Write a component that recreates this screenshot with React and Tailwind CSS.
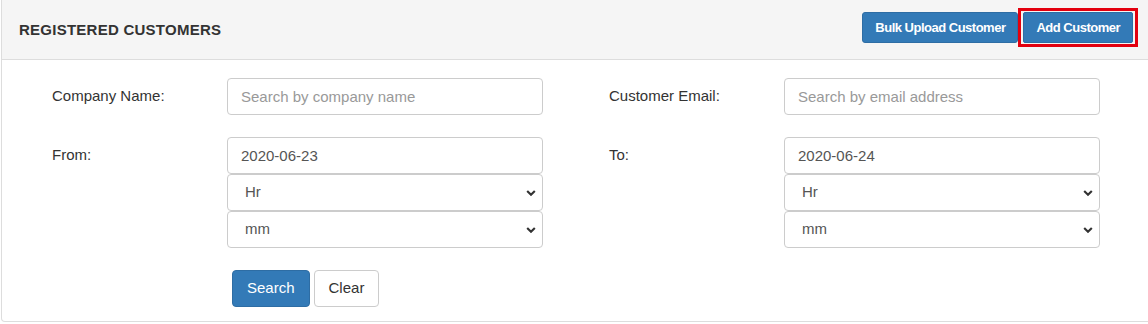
import React from "react";

const font = { fontFamily: '"Liberation Sans", Arial, sans-serif' };

function Chevron() {
  return (
    <svg
      className="pointer-events-none absolute right-[7px] top-1/2 -translate-y-1/2"
      width="10"
      height="7"
      viewBox="0 0 10 7"
    >
      <path d="M1.2 1.4 L5 5.2 L8.8 1.4" fill="none" stroke="#333" strokeWidth="2.1" />
    </svg>
  );
}

function Select({ value }) {
  return (
    <div className="relative h-[37px] w-[316px]">
      <select
        defaultValue={value}
        className="h-full w-full appearance-none rounded-[4px] border border-[#ccc] bg-white pl-[17px] text-[15px] text-[#555] outline-none"
        style={font}
      >
        <option>{value}</option>
      </select>
      <Chevron />
    </div>
  );
}

function TextInput({ placeholder, value }) {
  return (
    <input
      defaultValue={value}
      placeholder={placeholder}
      className="h-[37px] w-[316px] rounded-[4px] border border-[#ccc] bg-white px-[13px] text-[15px] text-[#555] placeholder:text-[#999] outline-none"
      style={font}
    />
  );
}

function DateBlock({ value }) {
  return (
    <div className="flex flex-col">
      <TextInput value={value} />
      <Select value="Hr" />
      <Select value="mm" />
    </div>
  );
}

export default function App() {
  return (
    <div className="h-[324px] w-[1148px] overflow-hidden bg-white" style={font}>
      <div className="ml-px w-[1150px] rounded-b-[4px] border-x border-b border-[#ddd]">
        <div className="flex h-[60px] items-start justify-between border-b border-[#ddd] bg-[#f5f5f5] pl-[17px] pr-[12px]">
          <div className="mt-[20px] text-[15px] font-bold leading-[20px] tracking-[0.25px] text-[#333]">
            REGISTERED CUSTOMERS
          </div>
          <div className="mt-[8px] flex items-center">
            <button className="h-[31px] rounded-[3px] border border-[#2e6da4] bg-[#337ab7] px-[12px] text-[13px] font-bold tracking-[-0.5px] text-white">
              Bulk Upload Customer
            </button>
            <div className="border-[3px] border-[#e3000f] px-[2px] py-[1px]">
              <button className="h-[31px] rounded-[2px] border border-[#2e6da4] bg-[#337ab7] px-[12px] text-[13px] font-bold tracking-[-0.5px] text-white">
                Add Customer
              </button>
            </div>
          </div>
        </div>

        <div className="pb-[14px] pl-[50px] pt-[18px] text-[15px] text-[#333]">
          <div className="flex items-center">
            <div className="w-[175px]">Company Name:</div>
            <TextInput placeholder="Search by company name" />
            <div className="w-[66px]" />
            <div className="w-[175px]">Customer Email:</div>
            <TextInput placeholder="Search by email address" />
          </div>

          <div className="mt-[22px] flex items-start">
            <div className="flex h-[37px] w-[175px] items-center">From:</div>
            <DateBlock value="2020-06-23" />
            <div className="w-[66px]" />
            <div className="flex h-[37px] w-[175px] items-center">To:</div>
            <DateBlock value="2020-06-24" />
          </div>

          <div className="ml-[180px] mt-[22px] flex gap-[4px]">
            <button className="h-[37px] rounded-[4px] border border-[#2e6da4] bg-[#337ab7] px-[14px] text-[15px] text-white">
              Search
            </button>
            <button className="h-[37px] rounded-[4px] border border-[#ccc] bg-white px-[14px] text-[15px] text-[#333]">
              Clear
            </button>
          </div>
        </div>
      </div>
    </div>
  );
}
